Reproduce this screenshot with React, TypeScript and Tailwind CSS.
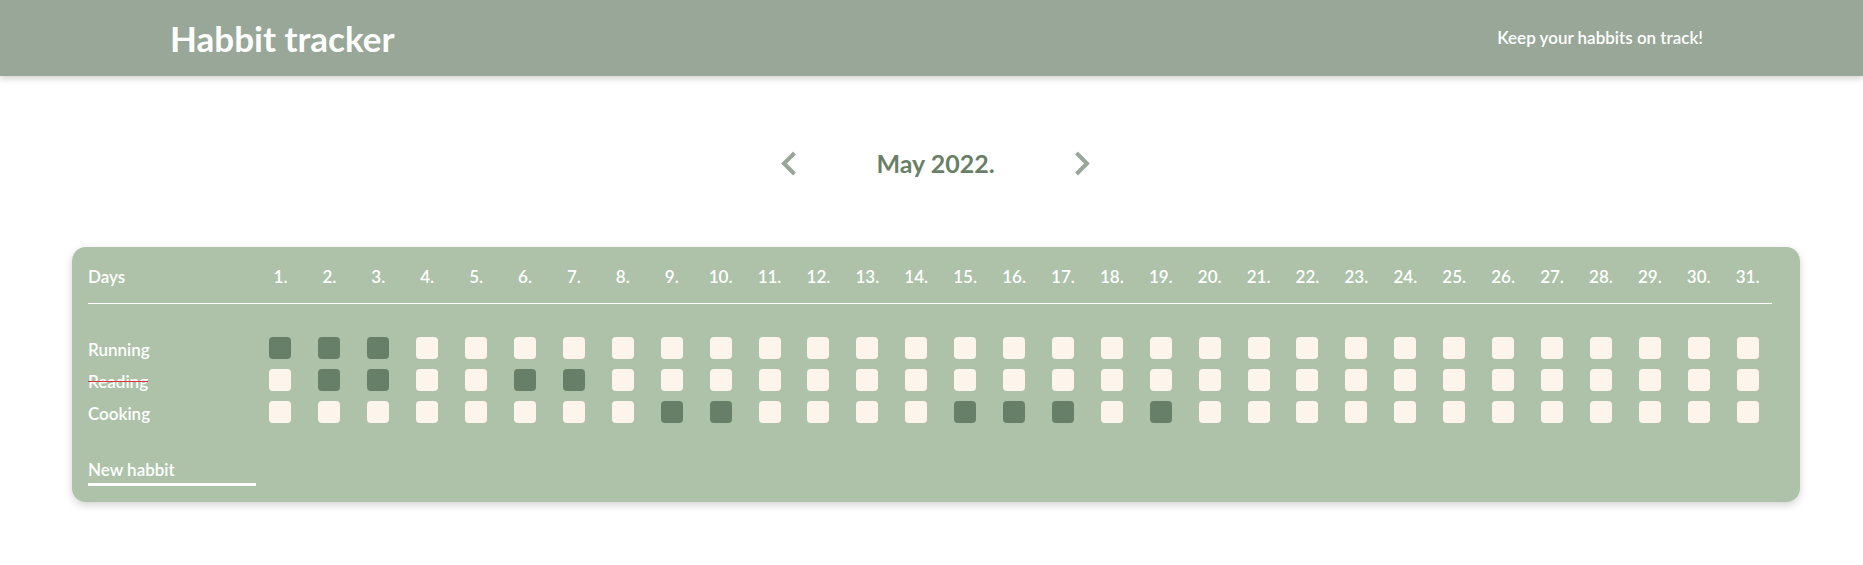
import React from "react";

const habits = [
  { name: "Running", done: [1, 2, 3], strike: false },
  { name: "Reading", done: [2, 3, 6, 7], strike: true },
  { name: "Cooking", done: [9, 10, 15, 16, 17, 19], strike: false },
];

const days = Array.from({ length: 31 }, (_, i) => i + 1);

function Chevron({ dir }: { dir: "left" | "right" }) {
  return (
    <svg width="16" height="25" viewBox="0 0 16 25" fill="none">
      {dir === "left" ? (
        <path d="M13.5 2 L3 12.5 L13.5 23" stroke="#98a798" strokeWidth="4" strokeLinecap="butt" strokeLinejoin="miter" />
      ) : (
        <path d="M2.5 2 L13 12.5 L2.5 23" stroke="#98a798" strokeWidth="4" strokeLinecap="butt" strokeLinejoin="miter" />
      )}
    </svg>
  );
}

export default function App() {
  return (
    <div className="min-h-[565px] bg-white font-['Lato','Noto_Sans',sans-serif]">
      <header className="h-[76px] bg-[#98a798] flex items-center justify-between pl-[170px] pr-[160px] shadow-[0_3px_6px_rgba(0,0,0,0.16)]">
        <h1 className="text-[35px] font-bold text-white leading-none">Habbit tracker</h1>
        <p className="text-[17px] font-semibold text-white">Keep your habbits on track!</p>
      </header>

      <div className="flex items-center justify-center pl-2 mt-[75px] h-[24px]">
        <button className="flex items-center"><Chevron dir="left" /></button>
        <h2 className="mx-[79px] text-[25px] font-bold text-[#6a7f68] leading-none">May 2022.</h2>
        <button className="flex items-center"><Chevron dir="right" /></button>
      </div>

      <div className="ml-[72px] mt-[72px] w-[1728px] rounded-[14px] bg-[#adc2a9] pl-[16px] pr-[28px] pt-[18px] pb-[16px] shadow-[0_3px_8px_rgba(0,0,0,0.18)] text-white">
        <div className="flex items-center pb-[14px] border-b border-white">
          <div className="w-[168px] text-[17px] font-semibold leading-[24px]">Days</div>
          {days.map((d) => (
            <div key={d} className="flex-1 text-center text-[17px] font-semibold leading-[24px]">
              {d}.
            </div>
          ))}
        </div>

        <div className="mt-[28px]">
          {habits.map((h) => (
            <div key={h.name} className="flex items-center h-[32px]">
              <div
                className={
                  h.strike
                    ? "w-[168px] text-[17px] font-semibold leading-[24px] pt-[3px] line-through decoration-[#d9353b]"
                    : "w-[168px] text-[17px] font-semibold leading-[24px] pt-[3px]"
                }
              >
                {h.name}
              </div>
              {days.map((d) => (
                <div key={d} className="flex-1 flex justify-center">
                  <div
                    className={
                      h.done.includes(d)
                        ? "w-[22px] h-[22px] rounded-[4px] bg-[#677f69]"
                        : "w-[22px] h-[22px] rounded-[4px] bg-[#fdf4eb]"
                    }
                  />
                </div>
              ))}
            </div>
          ))}
        </div>

        <div className="mt-[28px] w-[168px] h-[30px] border-b-[3px] border-white flex items-center">
          <span className="text-[17px] font-semibold leading-[24px]">New habbit</span>
        </div>
      </div>
    </div>
  );
}
